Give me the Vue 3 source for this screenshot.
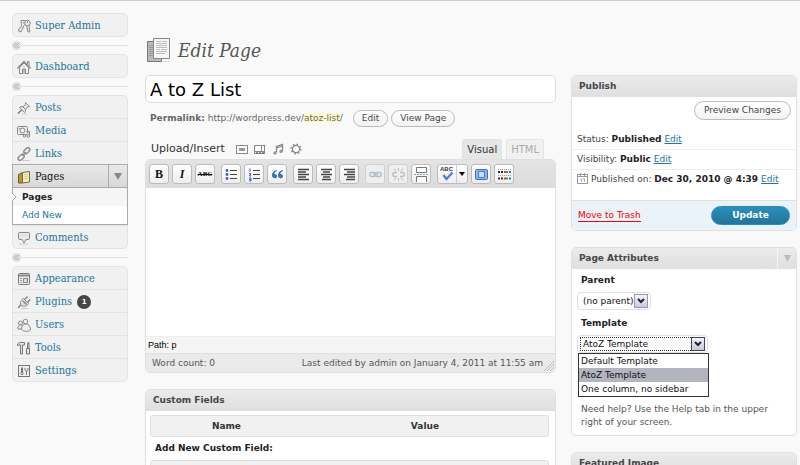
<script setup>
import { ref } from 'vue'

const icons = {
  keys: '<g fill="#eee" stroke="#888"><path d="M4 1.500h4l1 3-2 2-3 6.500-2.500-1 .5-2 1.500-1 1-2z"/><path d="M9.500 6l1.500 7h1.500l.5-2-1-1 .5-1.500-.8-3"/><circle cx="10.500" cy="4" r="2.800"/></g><path d="M10.500 2.500v1.500M6 3.500l1 .5" stroke="#777"/>',
  home: '<g fill="#f4f4f4" stroke="#888"><path d="M2.500 7.500v6h9v-6L7 3z"/><path d="M.5 8.500L7 1.500l6.500 7" fill="none" stroke-width="1.400"/><path d="M10.500 4.500v-3h1.500v4.500" /><path d="M5.500 13.500v-4.500h3v4.500M7 6v1M7 9v4"/></g>',
  pin: '<g fill="#e6e6e6" stroke="#888"><path d="M1 12.500L4.500 9" stroke="#777" stroke-width="1.400"/><path d="M2.500 6.500l5 5 1-.7V8.500l2.500-3 1.500.2-4-4 .2 1.500L6 5.800 4 5.500z"/><path d="M6 5.800l2.500 2.700" /></g><path d="M5 13h5" stroke="#ccc"/>',
  media: '<g fill="#eee" stroke="#888"><rect x=".5" y="2.500" width="10" height="8" rx="1"/><circle cx="5.500" cy="6.500" r="2.500"/><path d="M2 4.500h1"/><path d="M9.500 7.500h3v4.500" fill="none"/><circle cx="11.300" cy="12" r="1.300"/><circle cx="7.500" cy="12" r="1.200"/></g>',
  links: '<g fill="none" stroke="#888" stroke-width="1.300"><rect x="-3" y="-2" width="7" height="4" rx="2" transform="translate(9.500 4) rotate(-45)"/><rect x="-4" y="-2" width="7" height="4" rx="2" transform="translate(4.500 10) rotate(-45)"/><path d="M5 9l4-4"/></g><path d="M4 13.500h9" stroke="#ccc"/>',
  pages: '<path d="M1.500 4.500l4-2v10.500h-4z" fill="#b79a35" stroke="#6b5a20"/><path d="M5.500 2.500L12.500 1.500v10.500l-7 1z" fill="#f4eec0" stroke="#796c3b"/><path d="M7 5l4-.5M7 7l4-.5M7 9l4-.5" stroke="#d8cb92"/>',
  comment: '<path d="M2.500 1.500h9a1 1 0 011 1v5a1 1 0 01-1 1H9l-2 3.500-2-3.500H2.500a1 1 0 01-1-1v-5a1 1 0 011-1z" fill="#e6e6e6" stroke="#888"/><path d="M2 13h9" stroke="#ccc"/>',
  appearance: '<rect x="1.500" y="1.500" width="11" height="11" rx="1" fill="#eee" stroke="#777"/><path d="M2 3.500h10" stroke="#888" stroke-width="2"/><path d="M3 6.500h2M3 8.500h2M3 10.500h2" stroke="#999"/><rect x="6.500" y="6.500" width="4" height="4" fill="#ddd" stroke="#888"/>',
  plug: '<g stroke="#888" fill="#e0e0e0"><path d="M1 12.500c1.500 0 1-1.500 3-2.500" fill="none" stroke-width="1.500"/><path d="M4 10.500C2.500 7.500 4.500 4.500 6.500 3.500l5 5C10.500 11 7 12 4 10.500z"/><path d="M7.500 4.500L10.500 1.500M10.500 7.500L13 4.500M6 6l3.500 3.500" stroke-width="1.500"/></g><path d="M4 13.500h7" stroke="#ccc"/>',
  users: '<g fill="#eee" stroke="#888"><circle cx="3.500" cy="5" r="2"/><path d="M1 11c-.5-3 1-4 2.500-4s3 1 3 4z"/><circle cx="8.500" cy="3.500" r="2.300"/><path d="M4.500 11.500C4.500 7.500 6.500 6 9 6s4.500 2 4.500 5c0 3-7 3-9 .5z"/></g>',
  tools: '<g fill="#e6e6e6" stroke="#777"><path d="M.5 4.500V3l2-1.500h5v2.500H5.500v9h-2v-9H2z"/><path d="M10.500 7.500V2l1.500-.5V7.500M9.500 7.500h3v5.500h-3z"/></g>',
  settings: '<rect x="1.500" y="1.500" width="11" height="11" fill="#eee" stroke="#777"/><g fill="none" stroke="#777"><circle cx="5" cy="9.500" r="1.200"/><path d="M4.500 3.500v5M5.500 3.500v5M9.500 7v4"/><path d="M8 4v1.500c0 2 3 2 3 0V4"/></g>',
  bullets: '<g fill="#3a62b0"><circle cx="3" cy="3.500" r="1.400"/><circle cx="3" cy="7.500" r="1.400"/><circle cx="3" cy="11.500" r="1.400"/></g><path d="M6 3.500h7M6 7.500h7M6 11.500h7" stroke="#444"/>',
  numbers: '<path d="M3 1.500v3M2 6.500h1.500v1.500H2.500v1h1.500M2 11h2v1.500H2.500 4v1.500H2" stroke="#3a62b0" fill="none"/><path d="M6 3.500h7M6 7.500h7M6 11.500h7" stroke="#444"/>',
  quote: '<g fill="#3a70b5"><path d="M7 3C3.500 3.500 2 6 2 8.500 2 12 7 12 7 9.200 7 7.500 5.500 6.800 4.300 7 4.500 5.500 5.500 4.200 7 4z"/><path d="M13 3C9.500 3.500 8 6 8 8.500 8 12 13 12 13 9.200 13 7.500 11.500 6.800 10.300 7 10.500 5.500 11.500 4.200 13 4z"/></g>',
  left: '<path d="M2 2.500h11M2 5h8M2 7.500h11M2 10h8M2 12.500h11" stroke="#444" stroke-width="1.300"/>',
  center: '<path d="M2 2.500h11M4 5h7M2 7.500h11M4 10h7M3 12.500h9" stroke="#444" stroke-width="1.300"/>',
  right: '<path d="M2 2.500h11M5 5h8M2 7.500h11M5 10h8M4 12.500h9" stroke="#444" stroke-width="1.300"/>',
  link: '<g fill="none" stroke="#b4becb" stroke-width="1.400"><rect x="1.700" y="5.500" width="6" height="4" rx="2"/><rect x="7.300" y="5.500" width="6" height="4" rx="2"/><path d="M5 7.500h5"/></g>',
  unlink: '<g fill="none" stroke="#b4becb" stroke-width="1.400"><path d="M6 5.500H4c-3 0-3 4 0 4h2M9 5.500h2c3 0 3 4 0 4H9"/><path d="M7.500 1v3M3 1.500l2 2.500M12 1.500L10 4M7.500 11v3M3 13.500L5 11M12 13.500L10 11" stroke-width="1"/></g>',
  more: '<g fill="#fff" stroke="#777"><path d="M2.500 .5h10v5h-10zM2.500 15V9.500h10V15"/></g><path d="M0 7.500h15" stroke="#7aa7c7" stroke-dasharray="2 1"/>',
  spell: '<path d="M3.500 8l3 4L12.500 5.500" fill="none" stroke="#4b7fd6" stroke-width="2.400"/>',
  full: '<rect x="1.500" y="2.500" width="12" height="10" rx="1" fill="#8fb4f2" stroke="#3d6fc9"/><rect x="4.500" y="4.500" width="6" height="6" fill="#c9dcff" stroke="#4e7ed2"/>',
  sink: '<path d="M1 2.500h13M1 8.500h13" stroke="#999" stroke-dasharray="1 1"/><path d="M1 5h5M1 11.500h5" stroke="#333" stroke-width="2" stroke-dasharray="2 1"/><path d="M7 5h2M7 11.500h2" stroke="#c43" stroke-width="2"/><path d="M9 5h2M9 11.500h2" stroke="#3a4" stroke-width="2"/><path d="M12 5h2M12 11.500h2" stroke="#36c" stroke-width="2"/>',
  image: '<rect x="1.500" y="3.500" width="11" height="8" fill="#fff" stroke="#888"/><rect x="4" y="6" width="6" height="3" fill="#999"/>',
  video: '<rect x="1.500" y="3.500" width="10" height="8" fill="#fff" stroke="#888"/><path d="M2 9.500h9M8.500 4v5" stroke="#888"/><path d="M3 11h2M6 11h2M9 11h2" stroke="#666" stroke-width="1.500"/>',
  music: '<path d="M5.500 10.500v-6l6-2v7M5.500 6l6-2" fill="none" stroke="#888" stroke-width="1.300"/><circle cx="4" cy="11" r="1.700" fill="#999"/><circle cx="10" cy="9.500" r="1.700" fill="#999"/>',
  gear: '<circle cx="7" cy="7" r="3.600" fill="#fff" stroke="#888" stroke-width="1.200"/><circle cx="7" cy="7" r="4.800" fill="none" stroke="#888" stroke-width="1.500" stroke-dasharray="1.500 2.270"/>',
}

const menu = [
  [{ name: 'Super Admin', icon: 'keys' }],
  [{ name: 'Dashboard', icon: 'home' }],
  [
    { name: 'Posts', icon: 'pin' },
    { name: 'Media', icon: 'media' },
    { name: 'Links', icon: 'links' },
    { name: 'Pages', icon: 'pages', open: true, children: ['Pages', 'Add New'] },
    { name: 'Comments', icon: 'comment' },
  ],
  [
    { name: 'Appearance', icon: 'appearance' },
    { name: 'Plugins', icon: 'plug', count: 1 },
    { name: 'Users', icon: 'users' },
    { name: 'Tools', icon: 'tools' },
    { name: 'Settings', icon: 'settings' },
  ],
]

const mediaButtons = [
  ['image', 'Add an Image'],
  ['video', 'Add Video'],
  ['music', 'Add Audio'],
  ['gear', 'Add Media'],
]

const toolbar = [
  [
    { label: 'Bold', text: 'B', cls: 'bold' },
    { label: 'Italic', text: 'I', cls: 'italic' },
    { label: 'Strikethrough', text: 'ABC', cls: 'strike' },
  ],
  [
    { label: 'Unordered list', icon: 'bullets' },
    { label: 'Ordered list', icon: 'numbers' },
    { label: 'Blockquote', icon: 'quote' },
  ],
  [
    { label: 'Align left', icon: 'left' },
    { label: 'Align center', icon: 'center' },
    { label: 'Align right', icon: 'right' },
  ],
  [
    { label: 'Insert link', icon: 'link', disabled: true },
    { label: 'Unlink', icon: 'unlink', disabled: true },
    { label: 'Insert More tag', icon: 'more' },
  ],
  [
    { label: 'Toggle spellchecker', icon: 'spell', text: 'ABC', cls: 'spell', split: true },
    { label: 'Toggle fullscreen', icon: 'full' },
    { label: 'Show kitchen sink', icon: 'sink' },
  ],
]

const templates = ['Default Template', 'AtoZ Template', 'One column, no sidebar']
const title = ref('A to Z List')
const parent = ref('(no parent)')
const template = ref('AtoZ Template')
</script>

<template>
  <div class="page">
    <nav class="sidebar" aria-label="Admin menu">
      <template v-for="(group, g) in menu" :key="g">
        <div v-if="g" class="separator">
          <span class="knob"><svg width="7" height="7" viewBox="0 0 7 7"><path d="M3.500 1L1 3.500 3.500 6M6 1L3.500 3.500 6 6" fill="none" stroke="#aaa" /></svg></span>
        </div>
        <ul class="group">
          <li v-for="item in group" :key="item.name" :class="{ open: item.open }">
            <div class="item">
              <a href="#"><svg class="icon" width="14" height="14" viewBox="0 0 14 14" v-html="icons[item.icon]"></svg>{{ item.name }}<span v-if="item.count" class="badge">{{ item.count }}</span></a>
              <button v-if="item.open" class="toggle" type="button" aria-label="Collapse Pages"><svg width="8" height="7" viewBox="0 0 8 7"><path d="M0 0h8L4 7z" fill="#888" /></svg></button>
            </div>
            <ul v-if="item.children" class="submenu">
              <li v-for="(child, c) in item.children" :key="child">
                <a href="#" :class="{ current: c === 0 }"><svg v-if="c === 0" class="pointer" width="5" height="8" viewBox="0 0 5 8"><path d="M0 0l4 4-4 4" fill="#f9f9f9" stroke="#aaa" /></svg>{{ child }}</a>
              </li>
            </ul>
          </li>
        </ul>
      </template>
    </nav>

    <main class="content">
      <h1 class="heading">
        <svg width="26" height="26" viewBox="0 0 26 26">
          <path d="M1.500 4.500h14v20h-14z" fill="#bbb" stroke="#777" />
          <path d="M3 8.500h5M3 10.500h5M3 12.500h5M3 14.500h5M3 16.500h5M3 18.500h5" stroke="#999" />
          <path d="M7.500 1.500h16v20h-16z" fill="#f6f6f6" stroke="#888" />
          <path d="M10 4.500h5M16 4.500h5M10 6.500h11M10 8.500h11M10 10.500h11M10 12.500h4M15 12.500h6M10 14.500h11M10 16.500h9" stroke="#bbb" />
          <path d="M16 24.500h8" stroke="#ddd" />
        </svg>
        Edit Page
      </h1>

      <input v-model="title" class="title" type="text" aria-label="Page title" />

      <div class="permalink">
        <strong>Permalink:</strong>
        <span class="url">http://wordpress.dev/<mark>atoz-list</mark>/</span>
        <button class="pill" type="button">Edit</button>
        <button class="pill" type="button">View Page</button>
      </div>

      <div class="editor-top">
        <span class="upload">Upload/Insert</span>
        <div class="media">
          <button v-for="[icon, label] in mediaButtons" :key="icon" type="button" :aria-label="label"><svg width="14" height="14" viewBox="0 0 14 14" v-html="icons[icon]"></svg></button>
        </div>
        <div class="tabs">
          <button class="tab active" type="button">Visual</button>
          <button class="tab" type="button">HTML</button>
        </div>
      </div>

      <section class="editor">
        <div class="toolbar">
          <div v-for="(set, s) in toolbar" :key="s" class="set">
            <button v-for="tool in set" :key="tool.label" type="button" class="tool" :class="{ split: tool.split }" :disabled="tool.disabled" :aria-label="tool.label">
              <span class="face"><svg v-if="tool.icon" width="15" height="15" viewBox="0 0 15 15" v-html="icons[tool.icon]"></svg><span v-if="tool.text" :class="tool.cls">{{ tool.text }}</span></span>
              <span v-if="tool.split" class="caret"><svg width="6" height="4" viewBox="0 0 6 4"><path d="M0 0h6L3 4z" /></svg></span>
            </button>
          </div>
        </div>
        <textarea class="canvas" aria-label="Page content"></textarea>
        <div class="path">Path: p</div>
        <div class="status">
          <span>Word count: 0</span>
          <span>Last edited by admin on January 4, 2011 at 11:55 am</span>
          <svg class="grip" width="10" height="10" viewBox="0 0 10 10"><path d="M0 10L10 0M3 10l7-7M6 10l4-4" stroke="#bbb" /></svg>
        </div>
      </section>

      <section class="box">
        <h2 class="box-head">Custom Fields</h2>
        <div class="fields">
          <table class="field-table">
            <thead><tr><th>Name</th><th>Value</th></tr></thead>
          </table>
          <p class="add-new">Add New Custom Field:</p>
          <div class="new-field"></div>
        </div>
      </section>
    </main>

    <aside class="side">
      <section class="box">
        <h2 class="box-head">Publish</h2>
        <div class="preview"><button class="pill large" type="button">Preview Changes</button></div>
        <p class="row">Status: <b>Published</b> <a href="#">Edit</a></p>
        <p class="row">Visibility: <b>Public</b> <a href="#">Edit</a></p>
        <p class="row last">
          <svg class="calendar" width="11" height="11" viewBox="0 0 11 11"><rect x=".5" y="1.500" width="10" height="9" fill="#fff" stroke="#999" /><path d="M1 3.500h9M3.500 0v3M7.500 0v3" stroke="#999" /><path d="M3 6h1.500v3M6 6h1.500v3" fill="none" stroke="#aaa" /></svg>
          Published on: <b>Dec 30, 2010 @ 4:39</b> <a href="#">Edit</a>
        </p>
        <div class="actions">
          <a class="trash" href="#">Move to Trash</a>
          <button class="update" type="button">Update</button>
        </div>
      </section>

      <section class="box">
        <div class="box-head">
          <h2>Page Attributes</h2>
          <button class="collapse" type="button" aria-label="Toggle panel"><svg width="7" height="7" viewBox="0 0 7 7"><path d="M0 0h7L3.500 7z" fill="#bbb" /></svg></button>
        </div>
        <div class="attribute-body">
          <label for="parent">Parent</label>
          <div class="select">
            <select id="parent" v-model="parent"><option>(no parent)</option></select>
            <span class="arrow"><svg width="8" height="6" viewBox="0 0 8 6"><path d="M1 1l3 3 3-3" fill="none" stroke="#222" stroke-width="2" /></svg></span>
          </div>
          <label for="template">Template</label>
          <div class="select wide">
            <select id="template" v-model="template"><option v-for="t in templates" :key="t">{{ t }}</option></select>
            <span class="arrow"><svg width="8" height="6" viewBox="0 0 8 6"><path d="M1 1l3 3 3-3" fill="none" stroke="#222" stroke-width="2" /></svg></span>
            <ul class="options" role="listbox" aria-label="Template">
              <li v-for="t in templates" :key="t" role="option" :aria-selected="t === template" :class="{ selected: t === template }" @click="template = t">{{ t }}</li>
            </ul>
          </div>
          <p class="help">Need help? Use the Help tab in the upper right of your screen.</p>
        </div>
      </section>

      <section class="box">
        <h2 class="box-head">Featured Image</h2>
      </section>
    </aside>
  </div>
</template>

<style>
body {
  background: #f9f9f9;
}
</style>

<style scoped>
* {
  box-sizing: border-box;
}
.page {
  display: grid;
  grid-template-columns: 118px minmax(0, 1fr) 226px;
  column-gap: 15px;
  height: 100vh;
  overflow: hidden;
  padding: 0 3px 0 12px;
  border-top: 1px solid #ccc;
  background: #f9f9f9;
  color: #333;
  font: 9px/13px "DejaVu Sans", Verdana, sans-serif;
}
ul, h1, h2, p {
  margin: 0;
  padding: 0;
  list-style: none;
}
button, input, select, textarea {
  margin: 0;
  padding: 0;
  color: inherit;
  font: inherit;
}
svg {
  display: block;
  flex: none;
}
a {
  color: #21759b;
}

.sidebar {
  padding: 12px 2px 0 0;
}
.group {
  border: 1px solid #e3e3e3;
  border-radius: 5px;
  background: #f1f1f1;
}
.group > li + li > .item {
  border-top: 1px solid #e3e3e3;
}
.item {
  display: flex;
  min-height: 22px;
}
.item a {
  display: flex;
  flex: 1;
  align-items: center;
  min-height: 22px;
  padding: 2px 0 0 4px;
  color: #21759b;
  font: 11px/16px "DejaVu Serif Condensed", "DejaVu Serif", serif;
  text-decoration: none;
}
.icon {
  margin-right: 4px;
}
.badge {
  width: 14px;
  height: 14px;
  margin-left: 5px;
  border-radius: 7px;
  background: #464646;
  color: #fff;
  font: bold 7px/14px "DejaVu Sans", sans-serif;
  text-align: center;
}
.separator {
  display: flex;
  align-items: center;
  height: 17px;
}
.separator::after {
  content: "";
  flex: 1;
  height: 1px;
  background: #e3e3e3;
}
.knob {
  display: grid;
  place-items: center;
  width: 9px;
  height: 9px;
  border-radius: 5px;
  background: #e0e0e0;
}
.group > .open > .item {
  margin: 0 -1px;
  border: 1px solid #aaa;
  background: linear-gradient(#e9e9e9, #d8d8d8);
}
.open > .item a {
  color: #111;
}
.toggle {
  display: grid;
  place-items: center;
  width: 19px;
  border: 0;
  border-left: 1px solid #aaa;
  background: none;
}
.submenu {
  margin: 0 -1px;
  border: 1px solid #aaa;
  border-top: 0;
  background: #fff;
}
.submenu a {
  position: relative;
  display: block;
  padding: 2px 0 2px 9px;
  line-height: 14px;
  text-decoration: none;
}
.submenu .current {
  background: #f5f5f5;
  color: #222;
  font-weight: bold;
}
.pointer {
  position: absolute;
  top: 5px;
  left: -1px;
}

.content {
  padding-top: 34px;
}
.heading {
  display: flex;
  align-items: center;
  gap: 6px;
  height: 30px;
  padding-left: 1px;
  color: #555;
  font: italic 19px/30px "DejaVu Serif Condensed", "DejaVu Serif", serif;
}
.title {
  display: block;
  width: 100%;
  height: 28px;
  margin-top: 10px;
  padding: 0 4px;
  border: 1px solid #ddd;
  border-radius: 5px;
  background: #fff;
  color: #000;
  font-size: 18px;
}
.permalink {
  display: flex;
  align-items: center;
  gap: 3px;
  height: 18px;
  margin-top: 6px;
  padding-left: 5px;
  color: #666;
}
.url {
  margin-right: 7px;
}
mark {
  background: #fffbcc;
  color: inherit;
}
.pill {
  height: 17px;
  padding: 0 8px;
  border: 1px solid #bbb;
  border-radius: 9px;
  background: linear-gradient(#fff, #f2f2f2);
  color: #464646;
}
.pill.large {
  height: 19px;
  padding: 0 9px;
  border-radius: 10px;
}
.editor-top {
  display: flex;
  align-items: flex-end;
  margin-top: 12px;
  padding: 0 12px 0 6px;
}
.upload {
  font-size: 11px;
  line-height: 20px;
}
.media {
  display: flex;
  gap: 4px;
  margin-left: 10px;
  padding-bottom: 3px;
}
.media button {
  padding: 0;
  border: 0;
  background: none;
}
.tabs {
  display: flex;
  gap: 4px;
  margin-left: auto;
}
.tab {
  height: 20px;
  padding: 0 4px;
  border: 1px solid #e3e3e3;
  border-bottom: 0;
  border-radius: 3px 3px 0 0;
  background: #f1f1f1;
  color: #aaa;
  font-size: 10px;
}
.tab.active {
  background: #e6e6e6;
  color: #333;
}
.editor {
  border: 1px solid #dfdfdf;
  border-radius: 5px;
  background: #fff;
}
.toolbar {
  display: flex;
  gap: 6px;
  padding: 4px 3px;
  border-radius: 4px 4px 0 0;
  background: linear-gradient(#e4e4e4, #dcdcdc);
}
.set {
  display: flex;
  gap: 3px;
}
.tool {
  display: flex;
  width: 20px;
  height: 20px;
  border: 1px solid #bbb;
  border-radius: 3px;
  background: linear-gradient(#fff, #eee);
}
.tool:disabled {
  border-color: #d0d0d0;
  background: #efefef;
}
.tool.split {
  width: 31px;
}
.face {
  position: relative;
  display: grid;
  flex: 1;
  place-items: center;
  height: 18px;
}
.caret {
  display: grid;
  place-items: center;
  width: 11px;
  height: 18px;
  border-left: 1px solid #ccc;
}
.bold, .italic, .strike {
  color: #111;
  font: bold 12px/18px "Liberation Serif", serif;
}
.italic {
  font-style: italic;
}
.strike {
  font-size: 7px;
  text-decoration: line-through;
}
.spell {
  position: absolute;
  top: 1px;
  left: 2px;
  font: bold 6px/7px "Liberation Sans", sans-serif;
}
.canvas {
  display: block;
  width: 100%;
  height: 148px;
  border: 0;
  background: #fff;
  resize: none;
}
.path {
  padding: 1px 2px;
  border-top: 1px solid #eee;
  background: #f5f5f5;
  color: #000;
  font: 9px/14px "Liberation Sans", sans-serif;
}
.status {
  position: relative;
  display: flex;
  justify-content: space-between;
  padding: 3px 12px 2px 6px;
  border-top: 1px solid #dfdfdf;
  border-radius: 0 0 4px 4px;
  background: #eaeaea;
  color: #555;
}
.grip {
  position: absolute;
  right: 1px;
  bottom: 1px;
}

.box {
  border: 1px solid #dfdfdf;
  border-radius: 5px;
  background: #fff;
}
.editor + .box, .box + .box {
  margin-top: 16px;
}
.box-head {
  display: flex;
  height: 21px;
  padding-left: 7px;
  border-bottom: 1px solid #dfdfdf;
  border-radius: 4px 4px 0 0;
  background: linear-gradient(#ebebeb, #dfdfdf);
  color: #464646;
  font: bold 9px/20px "DejaVu Sans", sans-serif;
}
.box-head h2 {
  flex: 1;
  font: inherit;
}
.fields {
  padding: 4px 6px 8px 4px;
}
.field-table {
  width: 100%;
  table-layout: fixed;
  border: 1px solid #dfdfdf;
  border-radius: 3px;
  border-spacing: 0;
  background: #f1f1f1;
}
.field-table th {
  height: 20px;
  padding: 0;
}
.field-table th:first-child {
  width: 38%;
}
.add-new {
  padding: 5px;
  color: #222;
  font-weight: bold;
}
.new-field {
  height: 22px;
  border: 1px solid #dfdfdf;
  border-radius: 3px;
  background: #f1f1f1;
}

.side {
  padding-top: 74px;
}
.preview {
  display: flex;
  justify-content: flex-end;
  padding: 4px 5px 10px;
}
.row {
  padding: 3px 5px;
  color: #444;
}
.row + .row {
  border-top: 1px solid #eee;
}
.row b {
  color: #222;
}
.row.last {
  padding-bottom: 14px;
}
.calendar {
  float: left;
  margin-right: 3px;
}
.actions {
  display: flex;
  align-items: center;
  justify-content: space-between;
  padding: 5px 6px;
  border-top: 1px solid #dfdfdf;
  border-radius: 0 0 4px 4px;
  background: #eaf2fa;
}
.trash {
  border-bottom: 1px solid #f00;
  color: #f00;
  line-height: 11px;
  text-decoration: none;
}
.update {
  width: 79px;
  height: 19px;
  border: 1px solid #298cba;
  border-radius: 10px;
  background: linear-gradient(#2a8fbd, #21759b);
  color: #fff;
  font-weight: bold;
}
.collapse {
  display: grid;
  place-items: center;
  width: 19px;
  border: 0;
  border-left: 1px solid #f5f5f5;
  background: none;
}
.attribute-body {
  padding: 5px 5px 6px;
}
label {
  display: block;
  padding-left: 4px;
  color: #222;
  font-weight: bold;
}
.select {
  position: relative;
  display: flex;
  width: 74px;
  height: 18px;
  margin: 5px 0 7px;
  padding: 1px 2px;
  border: 1px solid #dfdfdf;
  border-radius: 4px;
  background: #fff;
}
.select.wide {
  width: 131px;
}
select {
  width: 100%;
  padding-left: 3px;
  border: 0;
  background: none;
  color: #111;
  line-height: 14px;
  appearance: none;
}
.wide select {
  outline: 1px dotted #333;
  outline-offset: -1px;
}
.arrow {
  position: absolute;
  top: 1px;
  right: 2px;
  display: grid;
  place-items: center;
  width: 14px;
  height: 14px;
  border: 1px solid #99a;
  background: linear-gradient(#f4f4fb, #c8c8dc);
  pointer-events: none;
}
.wide .arrow {
  border-color: #446;
}
.options {
  position: absolute;
  z-index: 1;
  top: 17px;
  left: 0;
  width: 131px;
  border: 1px solid #333;
  background: #fff;
  color: #111;
}
.options li {
  padding: 0 2px;
  line-height: 14px;
}
.options .selected {
  background: #b2b4bf;
}
.help {
  padding: 43px 4px 0;
  color: #555;
}
</style>
